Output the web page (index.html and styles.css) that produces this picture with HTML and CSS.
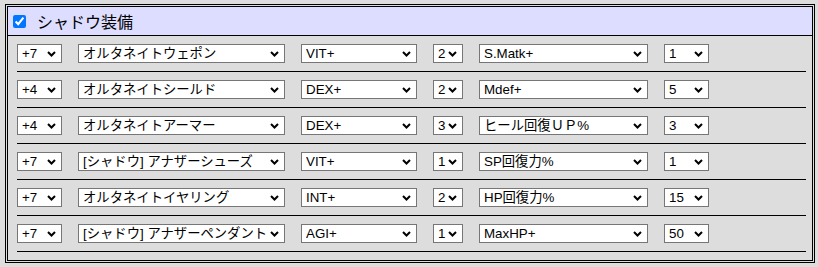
FILE: index.html
```html
<!DOCTYPE html>
<html lang="ja">
  <head>
    <meta charset="UTF-8" />
    <title>シャドウ装備</title>
    <link rel="stylesheet" href="styles.css">
  </head>
  <body>
    <div class="panel">
      <!-- Header -->
      <div class="panel-head">
        <input type="checkbox" id="shadowToggle" checked>
        <label for="shadowToggle">シャドウ装備</label>
      </div>

      <!-- Equipment rows -->
      <div class="panel-body">
        <div class="equip-row">
          <select class="sel-refine"><option>+7</option></select>
          <select class="sel-item"><option>オルタネイトウェポン</option></select>
          <select class="sel-stat"><option>VIT+</option></select>
          <select class="sel-lv"><option>2</option></select>
          <select class="sel-opt"><option>S.Matk+</option></select>
          <select class="sel-val"><option>1</option></select>
        </div>
        <div class="equip-row">
          <select class="sel-refine"><option>+4</option></select>
          <select class="sel-item"><option>オルタネイトシールド</option></select>
          <select class="sel-stat"><option>DEX+</option></select>
          <select class="sel-lv"><option>2</option></select>
          <select class="sel-opt"><option>Mdef+</option></select>
          <select class="sel-val"><option>5</option></select>
        </div>
        <div class="equip-row">
          <select class="sel-refine"><option>+4</option></select>
          <select class="sel-item"><option>オルタネイトアーマー</option></select>
          <select class="sel-stat"><option>DEX+</option></select>
          <select class="sel-lv"><option>3</option></select>
          <select class="sel-opt"><option>ヒール回復ＵＰ%</option></select>
          <select class="sel-val"><option>3</option></select>
        </div>
        <div class="equip-row">
          <select class="sel-refine"><option>+7</option></select>
          <select class="sel-item"><option>[シャドウ] アナザーシューズ</option></select>
          <select class="sel-stat"><option>VIT+</option></select>
          <select class="sel-lv"><option>1</option></select>
          <select class="sel-opt"><option>SP回復力%</option></select>
          <select class="sel-val"><option>1</option></select>
        </div>
        <div class="equip-row">
          <select class="sel-refine"><option>+7</option></select>
          <select class="sel-item"><option>オルタネイトイヤリング</option></select>
          <select class="sel-stat"><option>INT+</option></select>
          <select class="sel-lv"><option>2</option></select>
          <select class="sel-opt"><option>HP回復力%</option></select>
          <select class="sel-val"><option>15</option></select>
        </div>
        <div class="equip-row">
          <select class="sel-refine"><option>+7</option></select>
          <select class="sel-item"><option>[シャドウ] アナザーペンダント</option></select>
          <select class="sel-stat"><option>AGI+</option></select>
          <select class="sel-lv"><option>1</option></select>
          <select class="sel-opt"><option>MaxHP+</option></select>
          <select class="sel-val"><option>50</option></select>
        </div>
      </div>
    </div>
  </body>
</html>
```

FILE: styles.css
```css
/* Page */
body {
  margin: 0;
  background-color: #dddddd;
  font-family: "Liberation Sans", Arial, "Noto Sans CJK JP", sans-serif;
  color: #000;
}

.panel {
  box-sizing: border-box;
  width: 810px;
  margin: 4px 0 0 5px;
  border: 3px double #000;
}

/* Header bar */
.panel-head {
  display: flex;
  align-items: center;
  height: 28px;
  padding-left: 5px;
  background-color: #ddddff;
  border-bottom: 1px solid #000;
}

.panel-head input {
  width: 13px;
  height: 13px;
  margin: 0 11px 0 0;
  accent-color: #0075ff;
}

.panel-head label {
  font-family: "Noto Sans CJK JP", sans-serif;
  font-size: 16px;
  line-height: 20px;
}

/* Rows */
.panel-body {
  padding: 0 6px 8px 9px;
}

.equip-row {
  display: flex;
  gap: 16px;
  padding: 8px 0;
  border-bottom: 1px solid #000;
}

select {
  appearance: none;
  box-sizing: border-box;
  height: 19px;
  margin: 0;
  padding: 0 16px 0 4px;
  border: 1px solid #767676;
  border-radius: 0;
  background-color: #fff;
  background-image: url("data:image/svg+xml,%3Csvg xmlns='http://www.w3.org/2000/svg' width='9' height='6' viewBox='0 0 9 6'%3E%3Cpolyline points='1,1 4.5,4.5 8,1' fill='none' stroke='%23000' stroke-width='2'/%3E%3C/svg%3E");
  background-repeat: no-repeat;
  background-position: right 5px center;
  font-family: "Liberation Sans", Arial, "Noto Sans CJK JP", sans-serif;
  font-size: 13.33px;
  line-height: 17px;
  color: #000;
  white-space: nowrap;
  overflow: hidden;
}

.sel-refine { width: 45px; }
.sel-item { width: 207px; }
.sel-stat { width: 116px; }
.sel-lv { width: 30px; padding-right: 12px; }
.sel-opt { width: 169px; }
.sel-val { width: 45px; }
```
